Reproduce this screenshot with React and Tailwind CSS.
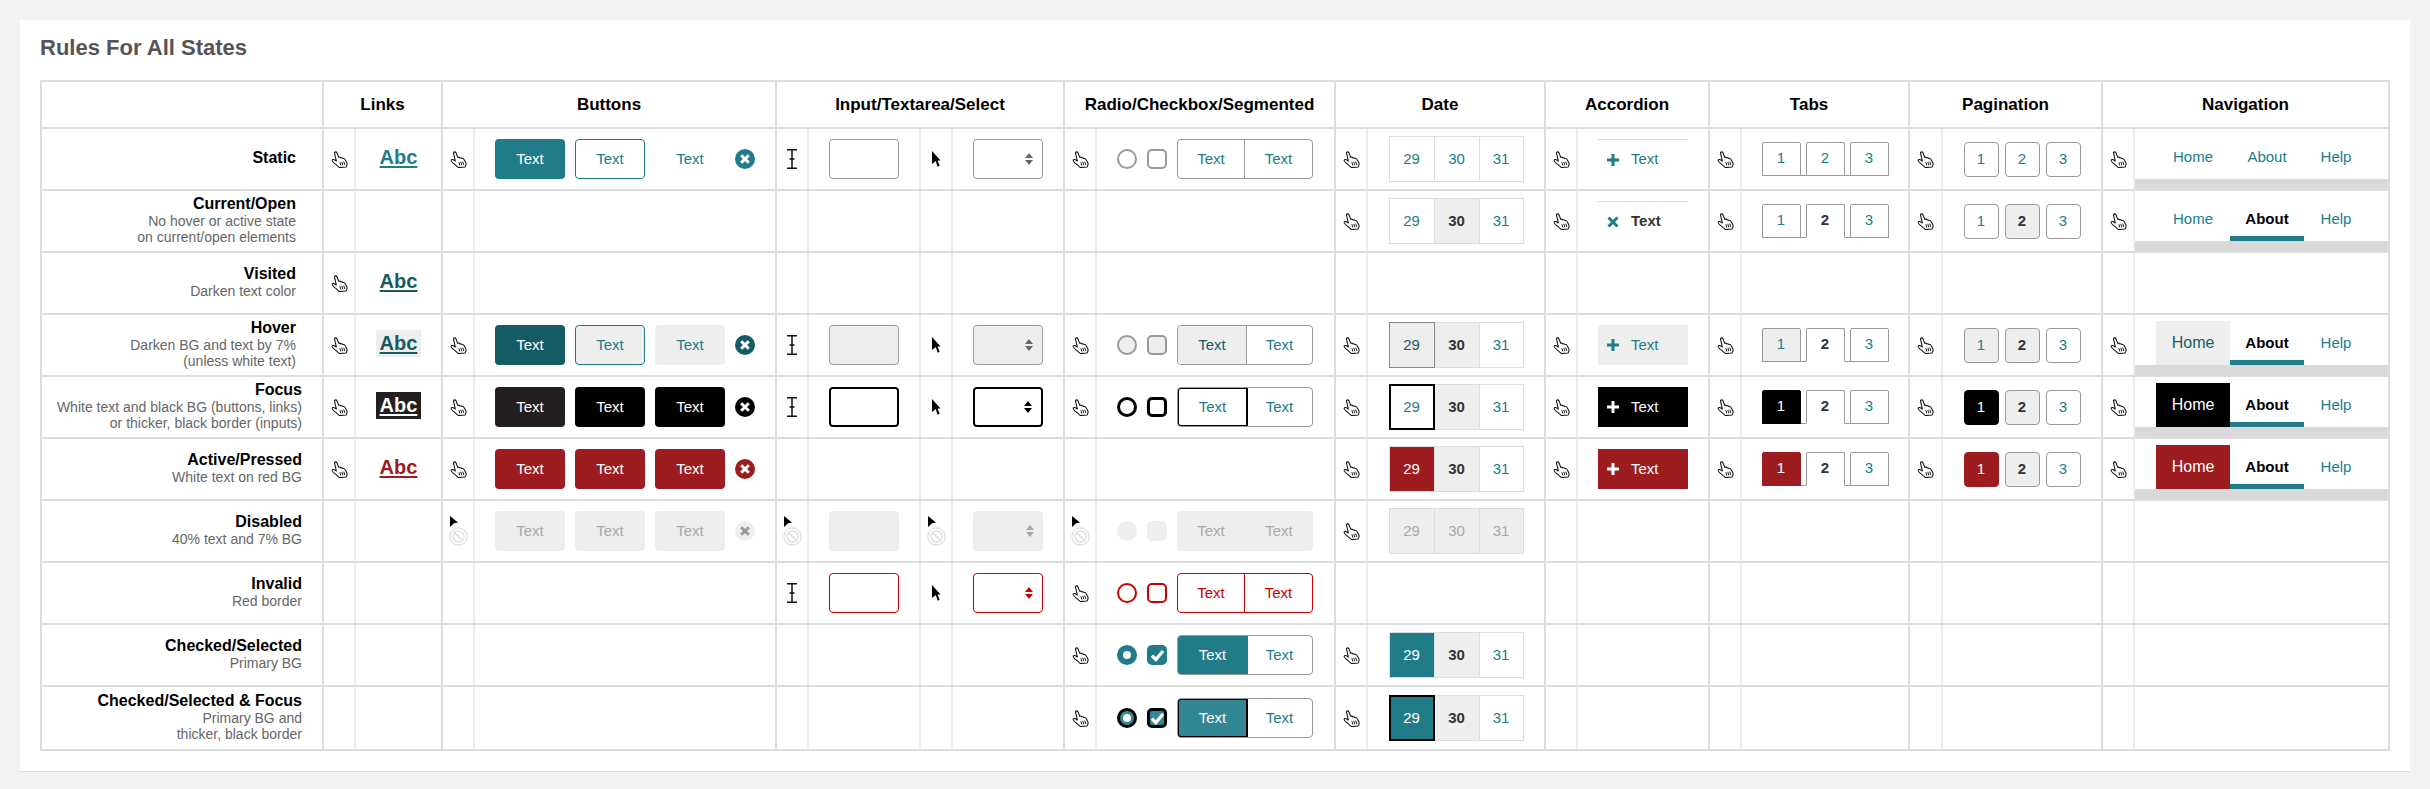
import React from 'react';

const widths = ['w-[282px]', 'w-[32px]', 'w-[87px]', 'w-[32px]', 'w-[302px]', 'w-[32px]', 'w-[112px]', 'w-[32px]', 'w-[112px]', 'w-[32px]', 'w-[239px]', 'w-[32px]', 'w-[178px]', 'w-[32px]', 'w-[132px]', 'w-[32px]', 'w-[168px]', 'w-[33px]', 'w-[160px]', 'w-[32px]', 'w-[255px]'];
const lightCols = [1, 3, 5, 6, 7, 9, 11, 13, 15, 17, 19];

const Hand = () => (
    <svg width="17" height="17" viewBox="0 0 16 16" className="block mx-auto">
        <path d="M3.2 1.6C3.8.6 5 .5 5.6 1.6L7.3 6C8 5.6 8.9 5.8 9.3 6.5 10 6.2 10.8 6.4 11.2 7.1 12 6.9 13 7.4 13.4 8.3L15 11.4C15.4 12.6 15 13.8 14.2 15L8 15.6C7 14.6 5.6 13.6 4.2 12.4 3 11.4.8 9.6 1.1 8.6 1.5 7.6 3 8 5 9.4Z" fill="#fff" stroke="#111" strokeWidth="1" strokeLinejoin="round" />
        <path d="M8.4 10.6l.8 3M10.2 10.2l.9 3.2M12 10l1 3.2" stroke="#111" strokeWidth="0.9" />
    </svg>
);

const IBeam = () => (
    <svg width="10" height="20" viewBox="0 0 10 20" className="block mx-auto">
        <path d="M0 .8h10M0 19.2h10M5 1v18M2.5 10h5" stroke="#111" strokeWidth="1.5" fill="none" />
    </svg>
);

const Arrow = () => (
    <svg width="9" height="16" viewBox="0 0 9 16" className="block mx-auto">
        <path d="M0 0l8.5 9.4H5.6l2 5.4-1.9.9-2-5.6L0 13z" fill="#000" />
    </svg>
);

const NotAllowed = () => (
    <svg width="19" height="30" viewBox="0 0 19 30" className="block mx-auto">
        <path d="M1 0l8 6.6-4 .6L1 11z" fill="#000" />
        <circle cx="9.5" cy="20.5" r="8.7" fill="none" stroke="#ddd" strokeWidth="1.2" />
        <circle cx="9.5" cy="20.5" r="5.6" fill="none" stroke="#ddd" strokeWidth="1.2" />
        <path d="M5.5 16.5l8 8" stroke="#ddd" strokeWidth="1.6" />
    </svg>
);

const Abc = ({ className }) => (
    <div className={`w-[45px] h-[27px] mx-auto mb-[4px] flex items-center justify-center text-[20px] font-bold underline decoration-[1.5px] underline-offset-[2px] ${className}`}>
        Abc
    </div>
);

const buttonBase = 'w-[70px] h-10 rounded flex items-center justify-center text-[15px]';

const CloseCircle = ({ bg, x = '#fff' }) => (
    <svg width="20" height="20" viewBox="0 0 20 20" className="shrink-0">
        <circle cx="10" cy="10" r="10" fill={bg} />
        <path d="M6.2 6.2l7.6 7.6M13.8 6.2l-7.6 7.6" stroke={x} strokeWidth="3" />
    </svg>
);

const Buttons = ({ a, b, c, close, x }) => (
    <div className="flex items-center justify-center gap-[10px]">
        <div className={`${buttonBase} ${a}`}>Text</div>
        <div className={`${buttonBase} ${b}`}>Text</div>
        <div className={`${buttonBase} ${c}`}>Text</div>
        <CloseCircle bg={close} x={x} />
    </div>
);

const Input = ({ className }) => <div className={`w-[70px] h-10 mx-auto rounded ${className}`} />;

const Select = ({ className, arrow = '#666' }) => (
    <div className={`w-[70px] h-10 mx-auto rounded flex items-center justify-end pr-2 ${className}`}>
        <svg width="10" height="14" viewBox="0 0 10 14">
            <path d="M1 6l4-5 4 5zM1 8l4 5 4-5z" fill={arrow} />
        </svg>
    </div>
);

const Check = () => (
    <svg width="15" height="13" viewBox="0 0 14 12" className="shrink-0">
        <path d="M1.8 6.2l3.6 3.6 6.8-8" stroke="#fff" strokeWidth="3" fill="none" />
    </svg>
);

const Choice = ({ radio, box, dot, left, right, leftW }) => (
    <div className="flex items-center justify-center gap-[10px] pr-px">
        <div className={`w-5 h-5 rounded-full flex items-center justify-center ${radio}`}>
            {dot && <div className="w-2 h-2 rounded-full bg-white shrink-0" />}
        </div>
        <div className={`w-5 h-5 rounded-[5px] flex items-center justify-center ${box}`}>
            {dot && <Check />}
        </div>
        <div className={`w-[136px] h-10 rounded flex overflow-hidden text-[15px] ${right}`}>
            <div className={`${leftW} flex items-center justify-center ${left}`}>Text</div>
            <div className="flex-1 flex items-center justify-center">Text</div>
        </div>
    </div>
);

const DateCell = ({ w, className, children }) => (
    <div className={`${w} h-[46px] -ml-px first:ml-0 border flex items-center justify-center text-[15px] ${className}`}>
        {children}
    </div>
);

const idle = 'border-[#ddd] text-[#217c8a]';
const open = 'border-[#ddd] bg-[#eee] text-[#333] font-bold';

const Dates = ({ first = idle, second = open }) => (
    <div className="flex justify-center">
        <DateCell w="w-[46px]" className={first}>29</DateCell>
        <DateCell w="w-[46px]" className={second}>30</DateCell>
        <DateCell w="w-[45px]" className={idle}>31</DateCell>
    </div>
);

const DisabledDates = () => {
    const off = 'border-[#ddd] bg-[#eee] text-[#a8a8a8]';
    return (
        <div className="flex justify-center">
            <DateCell w="w-[46px]" className={off}>29</DateCell>
            <DateCell w="w-[46px]" className={off}>30</DateCell>
            <DateCell w="w-[45px]" className={off}>31</DateCell>
        </div>
    );
};

const Accordion = ({ className, icon = '#217c8a', closed }) => (
    <div className={`w-[90px] h-10 mx-auto flex items-center pl-[9px] gap-3 text-[15px] ${className}`}>
        <svg width="12" height="12" viewBox="0 0 12 12" className="shrink-0">
            {closed
                ? <path d="M1.5 1.5l9 9M10.5 1.5l-9 9" stroke={icon} strokeWidth="3" />
                : <path d="M6 0v12M0 6h12" stroke={icon} strokeWidth="3" />}
        </svg>
        <span>Text</span>
    </div>
);

const tabBase = 'w-[39px] h-[34px] -mb-px rounded-t-[2px] border flex items-center justify-center text-[15px]';
const tabIdle = 'border-[#999] bg-white text-[#217c8a]';
const tabOpen = 'border-[#999] border-b-white bg-white text-[#333] font-bold';

const Tabs = ({ first = tabIdle, second = tabOpen }) => (
    <div className="w-[127px] mx-auto flex gap-[5px] border-b border-[#999] mb-px">
        <div className={`${tabBase} ${first}`}>1</div>
        <div className={`${tabBase} ${second}`}>2</div>
        <div className={`${tabBase} ${tabIdle}`}>3</div>
    </div>
);

const pageBase = 'w-[35px] h-[35px] rounded border flex items-center justify-center text-[15px]';
const pageIdle = 'border-[#999] text-[#217c8a]';
const pageOpen = 'border-[#999] bg-[#eee] text-[#333] font-bold';

const Pages = ({ first = pageIdle, second = pageOpen }) => (
    <div className="flex justify-center gap-[6px]">
        <div className={`${pageBase} ${first}`}>1</div>
        <div className={`${pageBase} ${second}`}>2</div>
        <div className={`${pageBase} ${pageIdle}`}>3</div>
    </div>
);

const Nav = ({ home = 'text-[#217c8a]', about = 'text-black font-bold shadow-[inset_0_-5px_0_#217c8a]' }) => (
    <div className="flex flex-col">
        <div className="flex h-11 pl-[21px] text-[15px]">
            <div className={`w-[74px] flex items-center justify-center ${home}`}>Home</div>
            <div className={`w-[74px] flex items-center justify-center ${about}`}>About</div>
            <div className="w-[64px] flex items-center justify-center text-[#217c8a]">Help</div>
        </div>
        <div className="h-[10px] bg-[#d9d9d9]" />
    </div>
);

const teal = 'text-[#217c8a]';
const red = 'bg-[#9c1c20] text-white';
const black = 'bg-black text-white';
const gray = 'bg-[#eee]';

const rows = [
    {
        label: 'Static', pr: 'pr-[26px]',
        cells: {
            1: <Hand />, 2: <Abc className={teal} />,
            3: <Hand />, 4: <Buttons a="bg-[#217c8a] text-white" b="border border-[#217c8a] text-[#217c8a]" c={teal} close="#217c8a" />,
            5: <IBeam />, 6: <Input className="border border-[#999]" />, 7: <Arrow />, 8: <Select className="border border-[#999]" />,
            9: <Hand />, 10: <Choice radio="border-2 border-[#999]" box="border-2 border-[#999]" right="border border-[#999] text-[#217c8a]" left="border-r border-[#999]" leftW="w-[67px]" />,
            11: <Hand />, 12: <Dates second={idle} />,
            13: <Hand />, 14: <Accordion className="border-t border-[#ddd] text-[#217c8a]" />,
            15: <Hand />, 16: <Tabs second={tabIdle} />,
            17: <Hand />, 18: <Pages second={pageIdle} />,
            19: <Hand />, 20: <Nav about="text-[#217c8a]" />,
        },
    },
    {
        label: 'Current/Open', sub: ['No hover or active state', 'on current/open elements'], pr: 'pr-[26px]',
        cells: {
            11: <Hand />, 12: <Dates />,
            13: <Hand />, 14: <Accordion closed className="border-t border-[#ddd] text-[#333] font-bold" />,
            15: <Hand />, 16: <Tabs />,
            17: <Hand />, 18: <Pages />,
            19: <Hand />, 20: <Nav />,
        },
    },
    {
        label: 'Visited', sub: ['Darken text color'], pr: 'pr-[26px]',
        cells: { 1: <Hand />, 2: <Abc className="text-[#145b63]" /> },
    },
    {
        label: 'Hover', sub: ['Darken BG and text by 7%', '(unless white text)'], pr: 'pr-[26px]',
        cells: {
            1: <Hand />, 2: <Abc className="bg-[#eee] text-[#145b63]" />,
            3: <Hand />, 4: <Buttons a="bg-[#145b63] text-white" b="border border-[#217c8a] bg-[#eee] text-[#217c8a]" c="bg-[#eee] text-[#217c8a]" close="#145b63" />,
            5: <IBeam />, 6: <Input className="border border-[#999] bg-[#eee]" />, 7: <Arrow />, 8: <Select className="border border-[#999] bg-[#eee]" />,
            9: <Hand />, 10: <Choice radio="border-2 border-[#999] bg-[#eee]" box="border-2 border-[#999] bg-[#eee]" right="border border-[#999] text-[#217c8a]" left="border-r border-[#999] bg-[#eee] text-[#145b63]" leftW="w-[69px]" />,
            11: <Hand />, 12: <Dates first="border-[#888] bg-[#eee] text-[#145b63] relative" />,
            13: <Hand />, 14: <Accordion className="bg-[#eee] text-[#217c8a]" />,
            15: <Hand />, 16: <Tabs first="border-[#999] bg-[#eee] text-[#217c8a]" />,
            17: <Hand />, 18: <Pages first="border-[#999] bg-[#eee] text-[#217c8a]" />,
            19: <Hand />, 20: <Nav home="bg-[#eee] text-[#145b63] text-[16px]" />,
        },
    },
    {
        label: 'Focus', sub: ['White text and black BG (buttons, links)', 'or thicker, black border (inputs)'], pr: 'pr-5',
        cells: {
            1: <Hand />, 2: <Abc className="bg-[#231f20] text-white" />,
            3: <Hand />, 4: <Buttons a="bg-[#231f20] text-white" b={black} c={black} close="#000" />,
            5: <IBeam />, 6: <Input className="border-2 border-black" />, 7: <Arrow />, 8: <Select className="border-2 border-black" arrow="#000" />,
            9: <Hand />, 10: <Choice radio="border-[3px] border-black" box="border-[3px] border-black" right="border border-[#999] text-[#217c8a]" left="border-2 border-black rounded-l text-[#217c8a] -m-px h-10" leftW="w-[71px]" />,
            11: <Hand />, 12: <Dates first="border-2 border-black text-[#217c8a] relative" />,
            13: <Hand />, 14: <Accordion className={black} icon="#fff" />,
            15: <Hand />, 16: <Tabs first="border-black bg-black text-white" />,
            17: <Hand />, 18: <Pages first="border-black bg-black text-white" />,
            19: <Hand />, 20: <Nav home="bg-black text-white text-[16px]" />,
        },
    },
    {
        label: 'Active/Pressed', sub: ['White text on red BG'], pr: 'pr-5',
        cells: {
            1: <Hand />, 2: <Abc className="text-[#9c1c20]" />,
            3: <Hand />, 4: <Buttons a={red} b={red} c={red} close="#9c1c20" />,
            11: <Hand />, 12: <Dates first="border-[#ddd] bg-[#9c1c20] text-white" />,
            13: <Hand />, 14: <Accordion className={red} icon="#fff" />,
            15: <Hand />, 16: <Tabs first="border-[#9c1c20] bg-[#9c1c20] text-white" />,
            17: <Hand />, 18: <Pages first="border-[#9c1c20] bg-[#9c1c20] text-white" />,
            19: <Hand />, 20: <Nav home="bg-[#9c1c20] text-white text-[16px]" />,
        },
    },
    {
        label: 'Disabled', sub: ['40% text and 7% BG'], pr: 'pr-5',
        cells: {
            3: <NotAllowed />, 4: <Buttons a="bg-[#eee] text-[#a8a8a8]" b="bg-[#eee] text-[#a8a8a8]" c="bg-[#eee] text-[#a8a8a8]" close="#eee" x="#999" />,
            5: <NotAllowed />, 6: <Input className={gray} />, 7: <NotAllowed />, 8: <Select className={gray} arrow="#a8a8a8" />,
            9: <NotAllowed />, 10: <Choice radio={gray} box={gray} right="bg-[#eee] text-[#a8a8a8]" left="" leftW="w-[68px]" />,
            11: <Hand />, 12: <DisabledDates />,
        },
    },
    {
        label: 'Invalid', sub: ['Red border'], pr: 'pr-5',
        cells: {
            5: <IBeam />, 6: <Input className="border border-[#c00]" />, 7: <Arrow />, 8: <Select className="border border-[#c00]" arrow="#c00" />,
            9: <Hand />, 10: <Choice radio="border-2 border-[#c00]" box="border-2 border-[#c00]" right="border border-[#c00] text-[#c00]" left="border-r border-[#c00]" leftW="w-[67px]" />,
        },
    },
    {
        label: 'Checked/Selected', sub: ['Primary BG'], pr: 'pr-5',
        cells: {
            9: <Hand />, 10: <Choice dot radio="bg-[#217c8a]" box="bg-[#217c8a]" right="border border-[#999] text-[#217c8a]" left="bg-[#217c8a] text-white -m-px h-10" leftW="w-[71px]" />,
            11: <Hand />, 12: <Dates first="border-[#ddd] bg-[#217c8a] text-white" />,
        },
    },
    {
        label: 'Checked/Selected & Focus', sub: ['Primary BG and', 'thicker, black border'], pr: 'pr-5', tall: true,
        cells: {
            9: <Hand />, 10: <Choice dot radio="border-[3px] border-black bg-[#338693]" box="border-[3px] border-black bg-[#338693]" right="border border-[#999] text-[#217c8a]" left="border-2 border-black rounded-l bg-[#338693] text-white -m-px h-10" leftW="w-[71px]" />,
            11: <Hand />, 12: <Dates first="border-2 border-black bg-[#217c8a] text-white relative" />,
        },
    },
];

const headers = [
    ['', 1], ['Links', 2], ['Buttons', 2], ['Input/Textarea/Select', 4], ['Radio/Checkbox/Segmented', 2],
    ['Date', 2], ['Accordion', 2], ['Tabs', 2], ['Pagination', 2], ['Navigation', 2],
];

const App = () => (
    <div className="min-h-screen bg-[#f2f2f2] pt-5 px-5 font-['Liberation_Sans',sans-serif]">
        <div className="bg-white border-b border-[#ddd] pt-4 px-5 pb-5">
            <h2 className="text-[22px] leading-6 font-bold text-[#555] mb-5">Rules For All States</h2>
            <table className="table-fixed border-collapse w-[2350px] border-2 border-[#ddd]">
                <colgroup>
                    {widths.map((w, i) => <col key={i} className={w} />)}
                </colgroup>
                <thead>
                    <tr className="h-[47px]">
                        {headers.map(([name, span], i) => (
                            <th key={i} colSpan={span} className="border-r-2 border-b-2 border-[#ddd] text-[17px] font-bold text-black text-center">
                                {name}
                            </th>
                        ))}
                    </tr>
                </thead>
                <tbody>
                    {rows.map((row) => (
                        <tr key={row.label} className={row.tall ? 'h-[64px]' : 'h-[62px]'}>
                            <td className={`border-r-2 border-b-2 border-[#ddd] text-right ${row.pr}`}>
                                <div className="pb-[3px]">
                                    <div className="text-[16px] leading-[18px] font-bold text-black">{row.label}</div>
                                    {row.sub && row.sub.map((line) => (
                                        <div key={line} className="text-[14px] leading-4 text-[#666]">{line}</div>
                                    ))}
                                </div>
                            </td>
                            {widths.slice(1).map((w, i) => {
                                const col = i + 1;
                                const light = lightCols.includes(col);
                                return (
                                    <td key={col} className={`p-0 border-b-2 border-b-[#ddd] border-r-2 ${light ? 'border-r-[#eee]' : 'border-r-[#ddd]'} ${col === 20 ? 'align-bottom' : 'align-middle'}`}>
                                        {row.cells[col]}
                                    </td>
                                );
                            })}
                        </tr>
                    ))}
                </tbody>
            </table>
        </div>
    </div>
);

export default App;
